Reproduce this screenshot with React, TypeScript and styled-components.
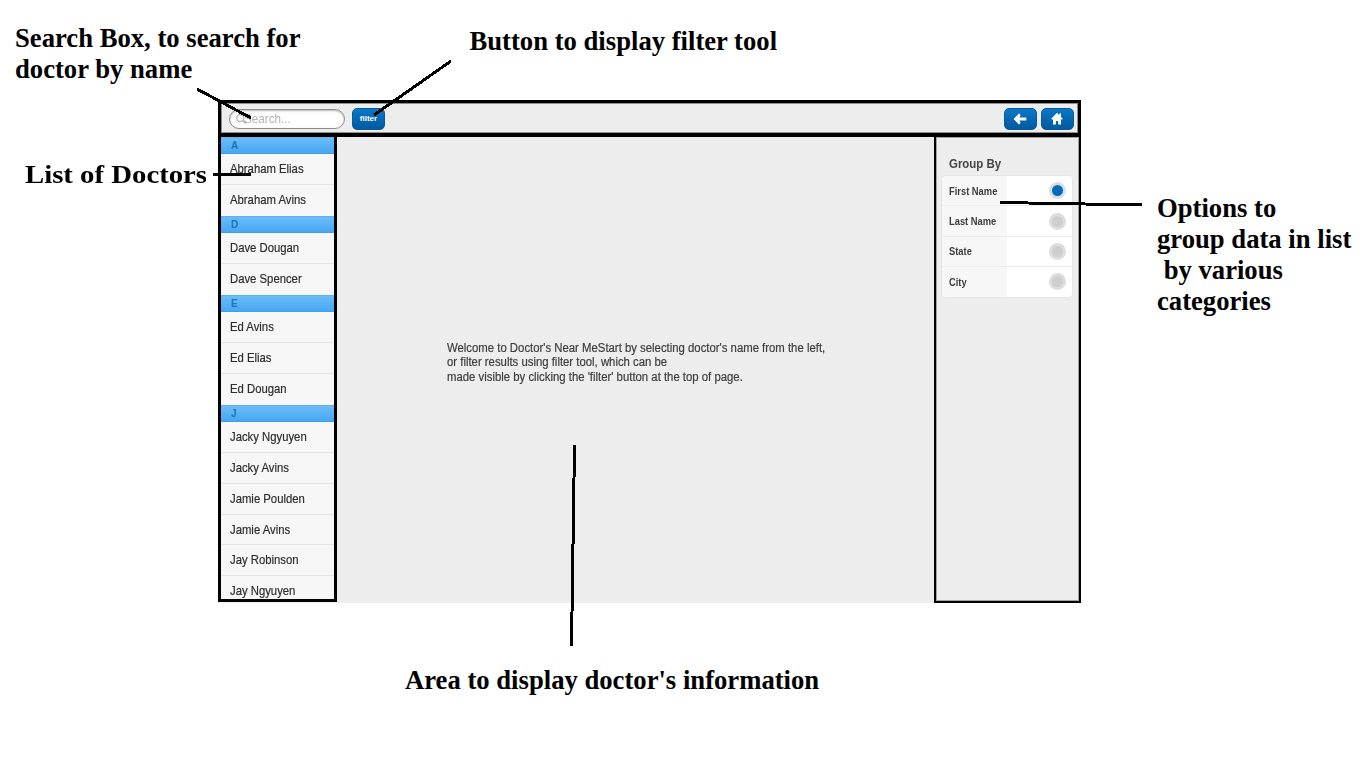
import React from "react";
import styled, { createGlobalStyle } from "styled-components";

const GlobalStyle = createGlobalStyle`
  * { box-sizing: border-box; }
  body { margin: 0; background: #fff; overflow: hidden; }
`;

const Page = styled.main`
  position: relative;
  width: 1366px;
  height: 768px;
  padding: 100px 0 0 218px;
  overflow: hidden;
  background: #fff;
  font-family: "Liberation Sans", Arial, sans-serif;
`;

const AppFrame = styled.div`
  display: flex;
  flex-direction: column;
  width: 863px;
  height: 503px;
  background: #ededed;
`;

const Toolbar = styled.header`
  display: flex;
  align-items: center;
  flex: none;
  height: 37px;
  padding: 0 4.5px 0 7px;
  border: solid #000;
  border-width: 3px 3px 4px 3px;
  box-shadow: inset 0 0 0 1px #8f8f8f;
  background: #ededed;
`;

const SearchBox = styled.div`
  display: flex;
  align-items: center;
  width: 116px;
  height: 20px;
  margin: 2px 7px 0 1px;
  padding-left: 6px;
  border: 1.5px solid #8c8c8c;
  border-radius: 10px;
  background: #fff;
  box-shadow: inset 0 1px 2px #b5b5b5;
  color: #b4b4b4;
  font-size: 13px;
  line-height: 18px;
`;

const SearchText = styled.span`
  margin-left: -5px;
  transform: scaleX(0.9);
  transform-origin: left;
`;

const Button = styled.button`
  display: flex;
  align-items: center;
  justify-content: center;
  width: 33px;
  height: 22px;
  margin: 1px 0 0 0;
  padding: 0;
  border: 1px solid #0b5a9c;
  border-radius: 5px;
  background: linear-gradient(#0b78c8, #0468b4 50%, #035a9f);
  color: #fff;
  font: bold 8px "Liberation Sans", Arial, sans-serif;
`;

const NavButtons = styled.div`
  display: flex;
  gap: 4px;
  margin-left: auto;
`;

const Body = styled.div`
  display: flex;
  flex: 1;
  min-height: 0;
`;

const Sidebar = styled.aside`
  width: 119px;
  height: 465px;
  overflow: hidden;
  border: solid #000;
  border-width: 0 3px 3px 3px;
  background: #f7f7f7;
`;

const GroupHeader = styled.div`
  height: 17.4px;
  padding-left: 10px;
  border-top: 1px solid #5eb0f0;
  border-bottom: 1px solid #3f9fe9;
  background: linear-gradient(#6cbcf9, #47a7f2);
  color: #1b75b5;
  font-size: 10px;
  font-weight: bold;
  line-height: 16px;
`;

const DoctorRow = styled.div`
  height: 30.8px;
  padding-left: 9px;
  border-bottom: 1px solid #e2e2e2;
  color: #2d2d2d;
  font-size: 13px;
  line-height: 30px;
  white-space: nowrap;
  -webkit-text-stroke: 0.2px #2d2d2d;

  &:has(+ ${GroupHeader}) { border-bottom-color: #f7f7f7; }
`;

const Condensed = styled.span<{ $scale: number }>`
  display: inline-block;
  transform: scaleX(${(p) => p.$scale});
  transform-origin: left;
`;

const Detail = styled.section`
  flex: 1;
  padding: 204px 0 0 109.5px;
  color: #3c3c3c;
  font-size: 12.5px;
  line-height: 14.4px;
  white-space: pre;
  -webkit-text-stroke: 0.2px #3c3c3c;
`;

const FilterPanel = styled.aside`
  width: 147px;
  height: 466px;
  padding: 16px 5px 0 5px;
  border: solid #000;
  border-width: 0 2px 2px 2px;
  box-shadow: inset 0 0 0 1px #a3a3a3;
`;

const PanelTitle = styled.h2`
  height: 22px;
  margin: 0;
  padding-left: 8px;
  color: #444;
  font-size: 13px;
  line-height: 21px;
`;

const Options = styled.div`
  width: 132px;
  overflow: hidden;
  border: 1px solid #e6e6e6;
  border-radius: 5px;
  background: #fff;
`;

const OptionRow = styled.div`
  display: flex;
  align-items: center;
  height: 30.4px;
  border-bottom: 1.5px solid #ededed;
  background: linear-gradient(90deg, #f7f7f7 65px, #fff 65px);
  &:last-child { height: 29.5px; border-bottom: 0; }
`;

const OptionLabel = styled.span`
  flex: 1;
  padding-left: 6.5px;
  color: #3d3d3d;
  font-size: 11px;
  font-weight: bold;
`;

const Radio = styled.span<{ $on?: boolean }>`
  width: 17px;
  height: 17px;
  margin-right: 6.5px;
  border: 3px solid ${(p) => (p.$on ? "#dcdfe2" : "#dddddd")};
  border-radius: 50%;
  background: ${(p) => (p.$on ? "#036bb9" : "#cecece")};
`;

const Note = styled.div<{ $x: number; $y: number }>`
  position: absolute;
  left: ${(p) => p.$x}px;
  top: ${(p) => p.$y}px;
  color: #000;
  font: bold 26.67px/31px "Liberation Serif", "Times New Roman", serif;
  white-space: pre;
`;

const ListNote = styled(Note)`
  width: 181px;
  overflow: hidden;
  filter: blur(0.5px);
  font-size: 25px;
`;

const Pointers = styled.svg`
  position: absolute;
  inset: 0;
  stroke: #000;
  stroke-width: 3;
  fill: none;
`;

const groups = [
  { letter: "A", names: ["Abraham Elias", "Abraham Avins"] },
  { letter: "D", names: ["Dave Dougan", "Dave Spencer"] },
  { letter: "E", names: ["Ed Avins", "Ed Elias", "Ed Dougan"] },
  {
    letter: "J",
    names: ["Jacky Ngyuyen", "Jacky Avins", "Jamie Poulden", "Jamie Avins", "Jay Robinson", "Jay Ngyuyen"],
  },
];

const options = ["First Name", "Last Name", "State", "City"];

const welcome = [
  "Welcome to Doctor's Near MeStart by selecting doctor's name from the left,",
  "or filter results using filter tool, which can be",
  "made visible by clicking the 'filter' button at the top of page.",
];

export default function App() {
  return (
    <Page>
      <GlobalStyle />
      <AppFrame>
        <Toolbar>
          <SearchBox>
            <svg width="13" height="13" viewBox="0 0 13 13" fill="none" stroke="#b9b9b9" strokeWidth="1.3">
              <circle cx="4.3" cy="5" r="3.5" />
              <path d="M7 7.5 10 10.5" strokeWidth="2" />
            </svg>
            <SearchText>Search...</SearchText>
          </SearchBox>
          <Button>filter</Button>
          <NavButtons>
            <Button aria-label="Back">
              <svg width="14" height="12" viewBox="0 0 14 12" fill="#fff">
                <path d="M.5 6 6 .6 7.6 2 6.4 4.4H13.3V7.6H6.4L7.6 10 6 11.4Z" />
              </svg>
            </Button>
            <Button aria-label="Home">
              <svg width="12" height="13" viewBox="0 0 12 13" fill="#fff">
                <path d="M6 .8 .2 6.8 1 7.6H2V12.5H4.9V9H7.1V12.5H10V7.6H11L11.8 6.8 10 5V1.6H8.3V3.2Z" />
              </svg>
            </Button>
          </NavButtons>
        </Toolbar>
        <Body>
          <Sidebar>
            {groups.map((g) => (
              <React.Fragment key={g.letter}>
                <GroupHeader>{g.letter}</GroupHeader>
                {g.names.map((n) => (
                  <DoctorRow key={n}>
                    <Condensed $scale={0.87}>{n}</Condensed>
                  </DoctorRow>
                ))}
              </React.Fragment>
            ))}
          </Sidebar>
          <Detail>
            {welcome.map((line) => (
              <div key={line}>
                <Condensed $scale={0.908}>{line}</Condensed>
              </div>
            ))}
          </Detail>
          <FilterPanel>
            <PanelTitle>
              <Condensed $scale={0.88}>Group By</Condensed>
            </PanelTitle>
            <Options>
              {options.map((o, i) => (
                <OptionRow key={o}>
                  <OptionLabel>
                    <Condensed $scale={0.85}>{o}</Condensed>
                  </OptionLabel>
                  <Radio $on={i === 0} />
                </OptionRow>
              ))}
            </Options>
          </FilterPanel>
        </Body>
      </AppFrame>

      <Note $x={15} $y={23}>{"Search Box, to search for\ndoctor by name"}</Note>
      <Note $x={469.5} $y={26}>Button to display filter tool</Note>
      <ListNote $x={25} $y={159}>
        <Condensed $scale={1.15}>List of Doctors</Condensed>
      </ListNote>
      <Note $x={1157} $y={193}>{"Options to\ngroup data in list\n by various\ncategories"}</Note>
      <Note $x={405} $y={665}>Area to display doctor's information</Note>

      <Pointers width="1366" height="768" viewBox="0 0 1366 768" shapeRendering="crispEdges">
        <path d="M197 89 251 118" />
        <path d="M451 61 374 115" />
        <path d="M213 174.5H251" />
        <path d="M1000 202.5 1142 205" />
        <path d="M574.5 445 571.5 646" />
      </Pointers>
    </Page>
  );
}
